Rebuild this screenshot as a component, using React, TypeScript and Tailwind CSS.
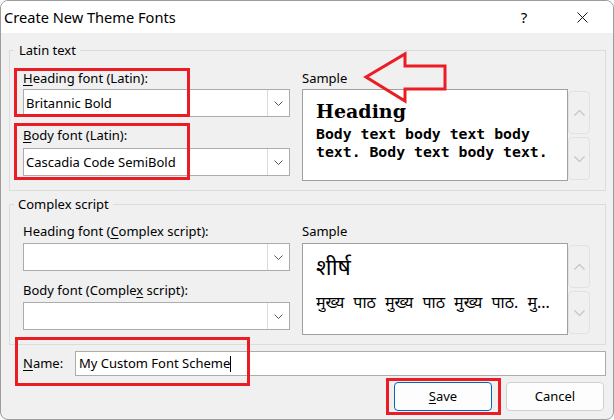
import React from "react";

const SANS = "font-['Noto_Sans',sans-serif]";

function ChevronDown({ className = "" }: { className?: string }) {
  return (
    <svg width="9" height="5" viewBox="0 0 9 5" className={className} fill="none">
      <path d="M0.5 0.5 L4.5 4.5 L8.5 0.5" stroke="currentColor" strokeWidth="1" />
    </svg>
  );
}

function ChevronUp({ className = "" }: { className?: string }) {
  return (
    <svg width="11" height="6" viewBox="0 0 11 6" className={className} fill="none">
      <path d="M0.5 5.5 L5.5 0.5 L10.5 5.5" stroke="currentColor" strokeWidth="1.2" />
    </svg>
  );
}

function ChevronDownBig({ className = "" }: { className?: string }) {
  return (
    <svg width="11" height="6" viewBox="0 0 11 6" className={className} fill="none">
      <path d="M0.5 0.5 L5.5 5.5 L10.5 0.5" stroke="currentColor" strokeWidth="1.2" />
    </svg>
  );
}

function Combo({ value }: { value?: string }) {
  return (
    <div className="flex h-[28px] w-full border border-[#acacac] bg-white">
      <div className="flex flex-1 items-center pl-[2px] text-[13px] leading-[17px] text-black">{value}</div>
      <div className="flex w-[22px] items-center justify-center border-l border-[#dadada] text-[#555]">
        <ChevronDown />
      </div>
    </div>
  );
}

function Spin() {
  return (
    <div className="flex flex-col gap-[3px] pt-[2px]">
      <div className="flex h-[43px] w-[22px] items-center justify-center rounded-[4px] border border-[#e2e2e2] bg-[#f0f0f0] text-[#c4c4c4]">
        <ChevronUp />
      </div>
      <div className="flex h-[43px] w-[22px] items-center justify-center rounded-[4px] border border-[#e2e2e2] bg-[#f0f0f0] text-[#c4c4c4]">
        <ChevronDownBig />
      </div>
    </div>
  );
}

function Label({ children, className = "" }: { children: React.ReactNode; className?: string }) {
  return <div className={`text-[13px] leading-[17px] text-black ${className}`}>{children}</div>;
}

function U({ children }: { children: React.ReactNode }) {
  return <span className="underline decoration-1 underline-offset-[2px]">{children}</span>;
}

export default function App() {
  return (
    <div className={`relative h-[420px] w-[614px] overflow-hidden bg-[#fafafa] ${SANS}`}>
      <div className="flex h-[420px] w-[614px] flex-col overflow-hidden rounded-[8px] border border-[#9c9c9c] bg-[#f0f0f0]">
        {/* Title bar */}
        <div className="flex h-[32px] items-center bg-white pl-[3px] pr-[8px]">
          <div className="text-[14.6px] leading-[20px] text-black">Create New Theme Fonts</div>
          <div className="ml-auto flex h-full gap-[12px]">
            <div className="flex h-full w-[46px] items-center justify-center text-[15px] text-black">?</div>
            <div className="flex h-full w-[46px] items-center justify-center">
              <svg width="11" height="11" viewBox="0 0 11 11" fill="none">
                <path d="M0.5 0.5 L10.5 10.5 M10.5 0.5 L0.5 10.5" stroke="#111" strokeWidth="1" />
              </svg>
            </div>
          </div>
        </div>

        {/* Body */}
        <div className="flex flex-1 flex-col pl-[8px] pr-[7px]">
          {/* Latin text */}
          <fieldset className="mt-[9px] border border-[#dcdcdc]">
            <legend className="ml-[4px] pl-[5px] pr-[4px] text-[13px] leading-[17px] text-black">Latin text</legend>
            <div className="flex gap-[12px] pb-[9px] pl-[13px] pr-[15px] pt-[11px]">
              <div className="flex w-[267px] flex-col">
                <Label>
                  <U>H</U>eading font (Latin):
                </Label>
                <div className="mt-[2px]">
                  <Combo value="Britannic Bold" />
                </div>
                <Label className="mt-[10px]">
                  <U>B</U>ody font (Latin):
                </Label>
                <div className="mt-[4px]">
                  <Combo value="Cascadia Code SemiBold" />
                </div>
              </div>
              <div className="flex w-[288px] flex-col">
                <Label>Sample</Label>
                <div className="mt-[2px] flex">
                  <div className="h-[92px] w-[266px] border border-[#a0a0a0] bg-white pl-[13px] pt-[11px]">
                    <div className="font-['DejaVu_Serif',serif] text-[19px] font-bold leading-[21px] text-black">
                      Heading
                    </div>
                    <div className="mt-[3px] font-['DejaVu_Sans_Mono',monospace] text-[14.8px] font-bold leading-[18px] text-black">
                      Body text body text body
                      <br />
                      text. Body text body text.
                    </div>
                  </div>
                  <Spin />
                </div>
              </div>
            </div>
          </fieldset>

          {/* Complex script */}
          <fieldset className="mt-[5px] border border-[#dcdcdc]">
            <legend className="ml-[4px] pl-[4px] pr-[4px] text-[13px] leading-[17px] text-black">Complex script</legend>
            <div className="flex gap-[12px] pb-[9px] pl-[13px] pr-[15px] pt-[10px]">
              <div className="flex w-[267px] flex-col">
                <Label>
                  Heading font (<U>C</U>omplex script):
                </Label>
                <div className="mt-[3px]">
                  <Combo />
                </div>
                <Label className="mt-[11px]">
                  Body font (Comple<U>x</U> script):
                </Label>
                <div className="mt-[3px]">
                  <Combo />
                </div>
              </div>
              <div className="flex w-[288px] flex-col">
                <Label>Sample</Label>
                <div className="mt-[3px] flex">
                  <div className="h-[92px] w-[266px] overflow-hidden border border-[#a0a0a0] bg-white pl-[13px] pt-[10px] font-['Noto_Sans_Devanagari','Noto_Sans','Lohit_Devanagari','FreeSans',sans-serif] text-black">
                    <div className="text-[23px] leading-[30px]">शीर्ष</div>
                    <div className="mt-[11px] whitespace-nowrap text-[16px] leading-[20px] [word-spacing:5px]">
                      मुख्य पाठ मुख्य पाठ मुख्य पाठ. मु...
                    </div>
                  </div>
                  <Spin />
                </div>
              </div>
            </div>
          </fieldset>

          {/* Name row */}
          <div className="mt-[6px] flex h-[25px] items-center">
            <div className="w-[66px] pl-[14px] text-[13px] leading-[17px] text-black">
              <U>N</U>ame:
            </div>
            <div className="flex h-[25px] flex-1 items-center border border-[#acacac] bg-white pl-[3px]">
              <span className="text-[13px] leading-[17px] text-black">My Custom Font Scheme</span>
              <span className="inline-block h-[16px] w-[1px] bg-black" />
            </div>
          </div>

          {/* Buttons */}
          <div className="mr-[2px] mt-[6px] flex justify-end gap-[14px]">
            <div className="flex h-[29px] w-[98px] items-center justify-center rounded-[4px] border border-[#0067c0] bg-[#fdfdfd] text-[13px] text-black">
              <span>
                <U>S</U>ave
              </span>
            </div>
            <div className="flex h-[29px] w-[98px] items-center justify-center rounded-[4px] border border-[#d0d0d0] bg-[#fdfdfd] text-[13px] text-black">
              Cancel
            </div>
          </div>
        </div>
      </div>

      {/* Red annotation boxes */}
      <div className="absolute left-[14px] top-[68px] h-[49px] w-[176px] border-[3px] border-[#ec1c24]" />
      <div className="absolute left-[14px] top-[123px] h-[57px] w-[176px] border-[3px] border-[#ec1c24]" />
      <div className="absolute left-[15px] top-[337px] h-[49px] w-[235px] border-[3px] border-[#ec1c24]" />
      <div className="absolute left-[386px] top-[378px] h-[37px] w-[115px] border-[3px] border-[#ec1c24]" />

      {/* Red arrow */}
      <svg className="absolute left-[360px] top-[48px]" width="92" height="60" viewBox="0 0 92 60" fill="none">
        <polygon
          points="6,29 45,6 45,18 85,18 85,41 45,41 45,53"
          stroke="#ec1c24"
          strokeWidth="3"
          strokeLinejoin="miter"
          fill="none"
        />
      </svg>
    </div>
  );
}
